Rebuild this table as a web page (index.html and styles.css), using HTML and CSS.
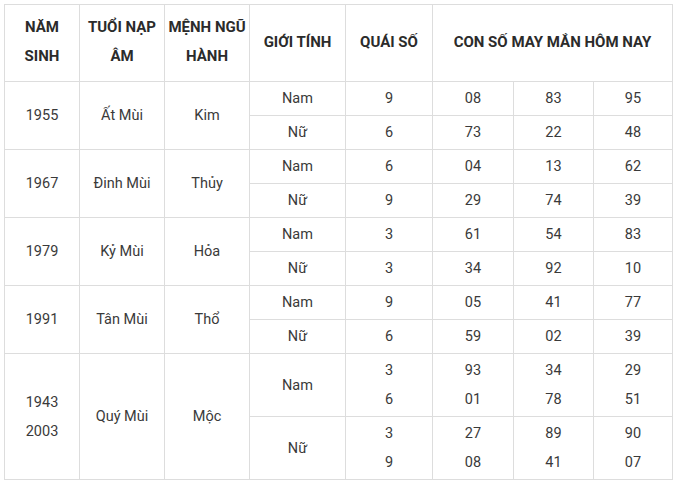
FILE: index.html
```html
<!DOCTYPE html>
<html lang="vi">
<head>
<meta charset="utf-8">
<link rel="stylesheet" href="styles.css">
</head>
<body>
<table class="lucky">
  <colgroup>
    <col class="c1"><col class="c2"><col class="c3"><col class="c4"><col class="c5"><col class="c6"><col class="c7"><col class="c8">
  </colgroup>
  <thead>
    <tr>
      <th>NĂM SINH</th>
      <th>TUỔI NẠP ÂM</th>
      <th>MỆNH NGŨ HÀNH</th>
      <th>GIỚI TÍNH</th>
      <th>QUÁI SỐ</th>
      <th colspan="3">CON SỐ MAY MẮN HÔM NAY</th>
    </tr>
  </thead>
  <tbody>
    <tr><td rowspan="2">1955</td><td rowspan="2">Ất Mùi</td><td rowspan="2">Kim</td><td>Nam</td><td>9</td><td>08</td><td>83</td><td>95</td></tr>
    <tr><td>Nữ</td><td>6</td><td>73</td><td>22</td><td>48</td></tr>
    <tr><td rowspan="2">1967</td><td rowspan="2">Đinh Mùi</td><td rowspan="2">Thủy</td><td>Nam</td><td>6</td><td>04</td><td>13</td><td>62</td></tr>
    <tr><td>Nữ</td><td>9</td><td>29</td><td>74</td><td>39</td></tr>
    <tr><td rowspan="2">1979</td><td rowspan="2">Kỷ Mùi</td><td rowspan="2">Hỏa</td><td>Nam</td><td>3</td><td>61</td><td>54</td><td>83</td></tr>
    <tr><td>Nữ</td><td>3</td><td>34</td><td>92</td><td>10</td></tr>
    <tr><td rowspan="2">1991</td><td rowspan="2">Tân Mùi</td><td rowspan="2">Thổ</td><td>Nam</td><td>9</td><td>05</td><td>41</td><td>77</td></tr>
    <tr><td>Nữ</td><td>6</td><td>59</td><td>02</td><td>39</td></tr>
    <tr class="tall"><td rowspan="2">1943<br>2003</td><td rowspan="2">Quý Mùi</td><td rowspan="2">Mộc</td><td>Nam</td><td>3<br>6</td><td>93<br>01</td><td>34<br>78</td><td>29<br>51</td></tr>
    <tr class="tall"><td>Nữ</td><td>3<br>9</td><td>27<br>08</td><td>89<br>41</td><td>90<br>07</td></tr>
  </tbody>
</table>
</body>
</html>
```

FILE: styles.css
```css
html, body {
  margin: 0;
  padding: 0;
  background: #ffffff;
}
body {
  padding: 4px 0 0 4px;
  font-family: Roboto, "Liberation Sans", Arial, sans-serif;
  color: #333333;
}
.lucky {
  border-collapse: collapse;
  table-layout: fixed;
  width: 669px;
}
.c1 { width: 75px; }
.c2 { width: 85px; }
.c3 { width: 85px; }
.c4 { width: 96px; }
.c5 { width: 87px; }
.c6 { width: 81px; }
.c7 { width: 80px; }
.c8 { width: 79px; }
.lucky th,
.lucky td {
  border: 1px solid #dddddd;
  text-align: center;
  vertical-align: middle;
}
.lucky th {
  font-size: 15px;
  font-weight: 700;
  line-height: 29px;
  padding: 8px 2px 10px;
  height: 58px;
  color: #2b2b2b;
}
.lucky td {
  font-size: 14.5px;
  font-weight: 400;
  line-height: 25px;
  padding: 4px 2px;
  height: 25px;
  color: #3a3a3a;
}
.lucky tr.tall td {
  line-height: 29px;
  padding: 2px 2px;
  height: 58px;
}
```
